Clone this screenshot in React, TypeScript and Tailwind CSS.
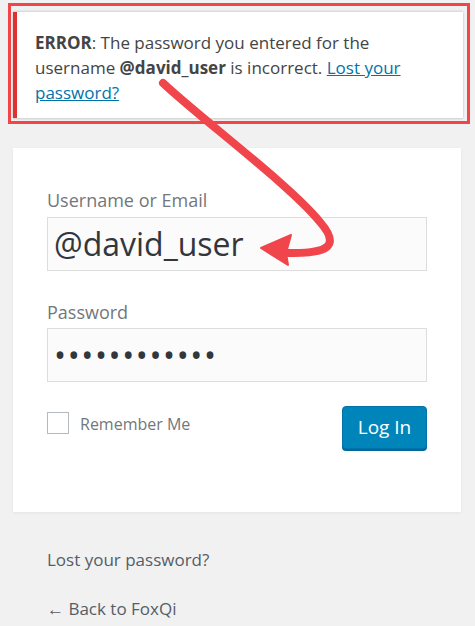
import React from 'react';

// annotation arrow drawn over the page
function Arrow() {
  return (
    <svg className="pointer-events-none absolute left-0 top-0" width="475" height="626" viewBox="0 0 475 626">
      <path
        d="M163 83 C200 118, 290 185, 320 222 C340 245, 330 254, 288 253"
        fill="none"
        stroke="#f0454b"
        strokeWidth="8"
        strokeLinecap="round"
      />
      <path d="M261 248 L291 235 L286 253 L288 265 Z" fill="#f0454b" stroke="#f0454b" strokeWidth="2" strokeLinejoin="round" />
    </svg>
  );
}

export default function App() {
  return (
    <div className="relative h-[626px] w-[475px] overflow-hidden bg-[#f1f1f1] pt-[3px] font-['Open_Sans','Noto_Sans',sans-serif]">
      {/* red highlight around the error notice */}
      <div className="ml-[8px] w-[462px] border-[3px] border-[#f2454a] pb-[3px] pl-[2px] pr-[4px] pt-[6px]">
        <div className="border-l-4 border-[#dc3232] bg-white pb-[13px] pl-[18px] pr-[10px] pt-[18px] text-[17px] leading-[25px] text-[#444] shadow-[0_1px_2px_rgba(0,0,0,0.15),0_-1px_2px_rgba(0,0,0,0.12)]">
          <strong className="font-bold">ERROR</strong>: The password you entered for the username{' '}
          <strong className="font-bold">@david_user</strong> is incorrect.{' '}
          <a className="text-[#0073aa] underline">Lost your password?</a>
        </div>
      </div>

      {/* login form */}
      <form className="ml-[13px] mt-[24px] w-[448px] bg-white px-[34px] pb-[63px] pt-[40px] shadow-[0_1px_3px_rgba(0,0,0,0.06)]">
        <label className="block text-[18px] leading-[24px] text-[#72777c]">Username or Email</label>
        <div className="mt-[5px] flex h-[54px] items-center border border-[#ddd] bg-[#fbfbfb] pl-[6px] text-[32px] text-[#32373c]">
          @david_user
        </div>
        <label className="mt-[29px] block text-[18px] leading-[24px] text-[#72777c]">Password</label>
        <div className="mt-[4px] flex h-[54px] items-center border border-[#ddd] bg-[#fbfbfb] pl-[6px] text-[32px] tracking-[1.6px] text-[#32373c]">
          ••••••••••••
        </div>
        <div className="mt-[24px] flex items-start justify-between">
          <div className="mt-[4px] flex items-center gap-[11px]">
            <span className="h-[22px] w-[22px] border border-[#b4b9be] bg-white" />
            <span className="pt-[3px] text-[16px] leading-[22px] text-[#72777c]">Remember Me</span>
          </div>
          <button
            type="button"
            className="h-[43px] w-[85px] rounded-[4px] border border-[#0073aa] bg-[#0085ba] text-[19px] text-white shadow-[0_2px_0_#006799]"
          >
            Log In
          </button>
        </div>
      </form>

      <div className="pl-[47px] pt-[36px] text-[17px] text-[#555d66]">
        <p className="leading-[24px]">Lost your password?</p>
        <p className="mt-[25px] leading-[24px]">← Back to FoxQi</p>
      </div>

      <Arrow />
    </div>
  );
}
